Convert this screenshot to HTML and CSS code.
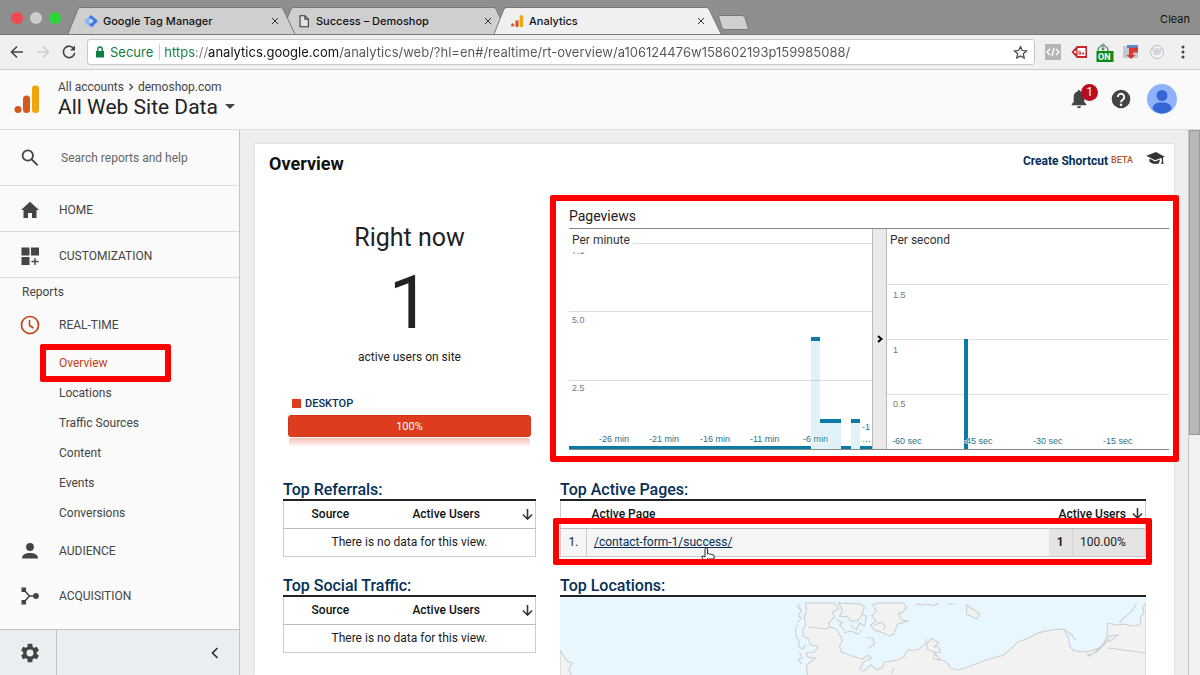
FILE: index.html
```
<!DOCTYPE html>
<html lang="en">
  <head>
    <meta charset="UTF-8" />
    <meta name="viewport" content="width=device-width, initial-scale=1.0" />
    <title>Analytics</title>
    <link rel="stylesheet" href="styles.css">
  </head>
  <body>
    <div class="tabStrip">
      <div class="lights">
        <span class="light red"></span>
        <span class="light grey"></span>
        <span class="light green"></span>
      </div>
      <div class="tabs">
        <div class="tab first">
          <svg class="tabShape" viewBox="0 0 227 27" preserveAspectRatio="none"><path d="M0 27 L10 2 Q11 .5 13 .5 H212 Q214 .5 215 2 L227 27" /></svg>
          <svg class="tabIcon" viewBox="0 0 16 16"><path fill="#8ab4f8" d="M7 1 1 7a1.4 1.4 0 0 0 0 2l6 6 3-3-4-4 5-4z" /><path fill="#4376e0" d="m8 1 7 6a1.4 1.4 0 0 1 0 2l-6 6-3-3 4-4-4-4z" /><path fill="#c7dafb" d="m8 5 3 3-3 3-3-3z" /></svg>
          <button class="tabTitle">Google Tag Manager</button>
          <button class="closeBtn" aria-label="Close tab"><svg viewBox="0 0 8 8"><path d="m1 1 6 6M7 1 1 7" /></svg></button>
        </div>
        <div class="tab">
          <svg class="tabShape" viewBox="0 0 227 27" preserveAspectRatio="none"><path d="M0 27 L10 2 Q11 .5 13 .5 H212 Q214 .5 215 2 L227 27" /></svg>
          <svg class="tabIcon" viewBox="0 0 16 16"><path fill="#e4e4e4" stroke="#333" stroke-width="1.2" d="M3.500 2h5.500l4 4v8.500H3.500zM9 2v4h4" /></svg>
          <button class="tabTitle">Success – Demoshop</button>
          <button class="closeBtn" aria-label="Close tab"><svg viewBox="0 0 8 8"><path d="m1 1 6 6M7 1 1 7" /></svg></button>
        </div>
        <div class="tab active">
          <svg class="tabShape" viewBox="0 0 227 27" preserveAspectRatio="none"><path d="M0 27 L10 2 Q11 .5 13 .5 H212 Q214 .5 215 2 L227 27" /></svg>
          <svg class="tabIcon" viewBox="0 0 16 16"><circle cx="3" cy="12.500" r="1.800" fill="#d4581c" /><rect x="6.200" y="7" width="3.600" height="8" rx="1.500" fill="#d4581c" /><rect x="11" y="1.500" width="4" height="13.500" rx="1.500" fill="#f0a50c" /></svg>
          <button class="tabTitle">Analytics</button>
          <button class="closeBtn" aria-label="Close tab"><svg viewBox="0 0 8 8"><path d="m1 1 6 6M7 1 1 7" /></svg></button>
        </div>
      </div>
      <button class="newTab" aria-label="New tab"><svg viewBox="0 0 31 15"><path d="M2 .5h22q2 0 3 2l3 10q.5 2-1 2H7q-2 0-3-2L.8 2.500Q.3.500 2 .5z" /></svg></button>
      <span class="profile">Clean</span>
    </div>

    <div class="toolbar">
      <button class="navBtn" aria-label="Back"><svg viewBox="0 0 16 16"><path d="M14 8H2.500M8 2.500 2.500 8 8 13.500" /></svg></button>
      <button class="navBtn" aria-label="Forward" disabled><svg viewBox="0 0 16 16"><path d="M2 8h11.500M8 2.500 13.500 8 8 13.500" /></svg></button>
      <button class="navBtn" aria-label="Reload"><svg viewBox="0 0 16 16"><path d="M13 5A5.700 5.700 0 1 0 13.700 8.800" /><path d="M14 1.500V6.500H9z" fill="#444" stroke="none" /></svg></button>
      <div class="omnibox">
        <svg class="lock" viewBox="0 0 10 12"><path fill="#0b8043" d="M1 5h8v6.500H1z" /><path fill="none" stroke="#0b8043" stroke-width="1.400" d="M2.800 5V3.200a2.200 2.200 0 0 1 4.400 0V5" /></svg>
        <label class="secure" for="url">Secure</label>
        <input class="url" id="url" type="text" value="https://analytics.google.com/analytics/web/?hl=en#/realtime/rt-overview/a106124476w158602193p159985088/" />
        <button class="starBtn" aria-label="Bookmark this page"><svg viewBox="0 0 16 16"><path d="m8 1.800 1.900 4.100 4.500.5-3.400 3 1 4.400L8 11.600l-4 2.200 1-4.400-3.400-3 4.500-.5z" /></svg></button>
      </div>
      <div class="extensions">
        <button class="ext" aria-label="Code"><svg viewBox="0 0 20 20"><path fill="#b4b4ba" d="M2 2h16v16H2z" /><path fill="none" stroke="#fff" stroke-width="1.400" d="M7 7 4 10l3 3M13 7l3 3-3 3M11 6l-2 8" /></svg></button>
        <button class="ext" aria-label="Tags"><svg viewBox="0 0 20 20"><path fill="#c4242c" d="M8 4h10v12H8l-5.500-6z" /><circle cx="6.300" cy="10" r="1.200" fill="#fff" /><path fill="#fff" d="M8.500 6h8v8h-8z" /><text x="9" y="12.500" fill="#c4242c" font-size="6" font-weight="700">9+</text></svg></button>
        <button class="ext" aria-label="Assistant"><svg viewBox="0 0 20 20"><path fill="none" stroke="#6b9a7c" stroke-width="1.500" d="M3 9c0-4 2-5 5-5s5 1 5 5" /><circle cx="8" cy="3.500" r="2" fill="#7aa68b" /><circle cx="8" cy="7" r="1.500" fill="#5b8f6e" /><path fill="#0b8a18" d="M1.500 9h17v11h-17z" /><text x="3" y="18" fill="#fff" font-size="9" font-weight="700">ON</text></svg></button>
        <button class="ext" aria-label="Downloads"><svg viewBox="0 0 20 20"><path fill="#c3c9cc" d="M2 4h15v12H2z" /><path fill="#4a90d9" d="M6 3h11v3H6z" /><path fill="#d93a35" d="M8 5.500h9v5h-5V13h2.500L10 17l-4.500-4H8z" /></svg></button>
        <button class="ext" aria-label="Data"><svg viewBox="0 0 20 20"><circle cx="10" cy="10" r="6.500" fill="#f5f5f5" stroke="#bbb" /><text x="10" y="9" text-anchor="middle" fill="#aaa" font-size="4">DATA</text><text x="10" y="13" text-anchor="middle" fill="#aaa" font-size="5">WP</text></svg></button>
        <button class="ext more" aria-label="Menu"><svg viewBox="0 0 20 20"><circle cx="10" cy="5" r="1.500" /><circle cx="10" cy="10" r="1.500" /><circle cx="10" cy="15" r="1.500" /></svg></button>
      </div>
    </div>

    <header class="header">
      <svg class="logo" viewBox="0 0 26 30"><circle cx="4" cy="25.500" r="3.500" fill="#d4581c" /><rect x="9" y="11.500" width="7" height="17.500" rx="3.500" fill="#d4581c" /><rect x="18" y="1.500" width="7" height="27.500" rx="3" fill="#f0a50c" /></svg>
      <div class="account">
        <div class="crumbs">All accounts <svg viewBox="0 0 8 10"><path d="m2 1 4 4-4 4" /></svg> demoshop.com</div>
        <button class="viewBtn">All Web Site Data <svg viewBox="0 0 10 5"><path d="M0 0h10L5 5z" /></svg></button>
      </div>
      <div class="headerIcons">
        <button class="bell" aria-label="Notifications">
          <svg viewBox="0 0 16 20"><path d="M8 1a1.500 1.500 0 0 1 1.500 1.600C12 3.300 13.300 5.500 13.300 8v5l2 2.200v1H.7v-1l2-2.200V8c0-2.500 1.300-4.700 3.800-5.400A1.500 1.500 0 0 1 8 1zM6 17.200h4a2 2 0 0 1-4 0z" /></svg>
          <span class="badge">1</span>
        </button>
        <button aria-label="Help"><svg class="help" viewBox="0 0 20 20"><circle cx="10" cy="10" r="9.300" fill="#444" /><path d="M6.800 8a3.200 3.200 0 1 1 5 2.600C10.500 11.500 10 12 10 13.300" fill="none" stroke="#fff" stroke-width="1.900" /><circle cx="10" cy="15.700" r="1.200" fill="#fff" /></svg></button>
        <button aria-label="Account"><svg class="avatar" viewBox="0 0 30 30"><circle cx="15" cy="15" r="15" fill="#8fb3fa" /><circle cx="15" cy="11.500" r="5.500" fill="#3566d6" /><path fill="#3566d6" d="M5.500 25c0-5 4-6.500 9.500-6.500s9.500 1.500 9.500 6.500c-3 3.500-6 4.500-9.500 4.500S8.500 28.500 5.500 25z" /></svg></button>
      </div>
    </header>

    <div class="page">
      <nav class="sidebar">
        <div class="searchRow">
          <label for="search" aria-label="Search"><svg class="navIcon" viewBox="0 0 20 20"><circle cx="7.800" cy="7.500" r="5.200" fill="none" stroke="#444" stroke-width="1.800" /><path stroke="#444" stroke-width="2" d="m11.700 11.400 6 6" /></svg></label>
          <input id="search" type="text" placeholder="Search reports and help" />
        </div>
        <a class="navRow lined" href="#home"><svg class="navIcon" viewBox="0 0 20 20"><path d="M10 1.800 19 10h-2.500v8H12v-5H8v5H3.500v-8H1z" /></svg>HOME</a>
        <a class="navRow lined" href="#customization"><svg class="navIcon" viewBox="0 0 20 20"><path d="M1.500 1.500h8v8h-8zM11 1.500h8v8h-8zM1.500 11h8v8h-8zM14.300 12h1.400v2.800h2.800v1.400h-2.800V19h-1.400v-2.800h-2.800v-1.400h2.800z" /></svg>CUSTOMIZATION</a>
        <div class="navLabel">Reports</div>
        <a class="navRow realtime" href="#realtime"><svg class="navIcon" viewBox="0 0 20 20"><circle cx="10" cy="10" r="8.500" fill="none" stroke="#c5400f" stroke-width="1.700" /><path fill="none" stroke="#c5400f" stroke-width="1.500" d="M9.500 5v5.500l4 2.500" /></svg>REAL-TIME</a>
        <ul class="subNav">
          <li class="current"><a href="#overview">Overview</a><span class="highlight"></span></li>
          <li><a href="#locations">Locations</a></li>
          <li><a href="#traffic">Traffic Sources</a></li>
          <li><a href="#content">Content</a></li>
          <li><a href="#events">Events</a></li>
          <li><a href="#conversions">Conversions</a></li>
        </ul>
        <a class="navRow" href="#audience"><svg class="navIcon" viewBox="0 0 20 20"><circle cx="10" cy="6" r="3.900" /><path d="M2 17.500c0-4 3.500-5.500 8-5.500s8 1.500 8 5.500z" /></svg>AUDIENCE</a>
        <a class="navRow" href="#acquisition"><svg class="navIcon" viewBox="0 0 20 20"><path d="M1.500 1.500h4.500v4.500h-4.500zM1.500 14h4.500v4.500h-4.500z" /><circle cx="16" cy="10" r="2.900" /><path fill="none" stroke="#444" stroke-width="1.600" d="m4 4 5.500 6H15M4 16l5.500-6" /></svg>ACQUISITION</a>
        <div class="sideFooter">
          <button class="admin" aria-label="Admin"><svg class="navIcon" viewBox="0 0 24 24"><path d="M19.400 13a7 7 0 0 0 0-2l2.300-1.800-2.200-3.900-2.800 1.100a8 8 0 0 0-1.800-1L14.500 2h-5l-.4 3.400a8 8 0 0 0-1.800 1L4.500 5.300 2.300 9.200 4.600 11a7 7 0 0 0 0 2l-2.300 1.800 2.200 3.900 2.800-1.100a8 8 0 0 0 1.800 1l.4 3.400h5l.4-3.400a8 8 0 0 0 1.800-1l2.800 1.100 2.200-3.900zM12 15.800a3.800 3.800 0 1 1 0-7.600 3.800 3.800 0 0 1 0 7.600z" /></svg></button>
          <button class="collapse" aria-label="Collapse menu"><svg viewBox="0 0 8 12"><path d="M6.500 1 1.500 6l5 5" /></svg></button>
        </div>
      </nav>

      <main class="content">
        <div class="card">
          <div class="cardTop">
            <h1>Overview</h1>
            <a class="shortcut" href="#shortcut">Create Shortcut <sup>BETA</sup></a>
            <button class="learn" aria-label="Learn"><svg viewBox="0 0 20 14"><path d="M10.500 0 0 4l9.500 5 6.500-2.500.8.500.2 3-1 3h2.500L18 6l2-1z" /><path d="M3.500 7v3.500q4 3.500 10 2L15 8 9.500 10.300z" /></svg></button>
          </div>

          <div class="summary">
            <section class="rightNow">
              <h2>Right now</h2>
              <div class="count">1</div>
              <p>active users on site</p>
              <div class="legend"><span></span>DESKTOP</div>
              <div class="bar">100%</div>
            </section>

            <section class="pageviews">
              <h2>Pageviews</h2>
              <div class="charts">
                <div class="chart minute">
                  <svg viewBox="0 0 303 220">
                    <path class="grid" d="M0 14.500h303M0 82.500h303M0 151.500h303" />
                    <path class="area" d="M242 220V108h9v82h21v30zM282 220v-30h9v30z" />
                    <path class="line" d="M242 110h9M251 192h21M282 192h9" />
                    <path class="line base" d="M0 218.500h242M272 218.500h10M291 218.500h12" />
                    <g class="value"><text x="3" y="25">7.5</text><text x="3" y="94">5.0</text><text x="3" y="162">2.5</text></g>
                    <g class="time"><text x="30" y="213">-26 min</text><text x="80" y="213">-21 min</text><text x="131" y="213">-16 min</text><text x="181" y="213">-11 min</text><text x="234" y="213">-6 min</text><text x="293" y="201">-1</text><text x="293" y="213">…</text></g>
                  </svg>
                  <h3>Per minute</h3>
                </div>
                <button class="splitter" aria-label="Expand"><svg viewBox="0 0 6 8"><path d="m1 1 3.500 3L1 7" /></svg></button>
                <div class="chart second">
                  <svg viewBox="0 0 282 220">
                    <path class="grid" d="M0 55.500h282M0 110.500h282M0 165.500h282" />
                    <path class="spike" d="M77 110h4v110h-4z" />
                    <g class="value"><text x="6" y="69">1.5</text><text x="6" y="124">1</text><text x="6" y="178">0.5</text></g>
                    <g class="time"><text x="5" y="215">-60 sec</text><text x="76" y="215">-45 sec</text><text x="146" y="215">-30 sec</text><text x="216" y="215">-15 sec</text></g>
                  </svg>
                  <h3>Per second</h3>
                </div>
              </div>
              <span class="highlight"></span>
            </section>
          </div>

          <div class="reports">
            <div class="column">
              <section class="report">
                <h2>Top Referrals:</h2>
                <table>
                  <thead>
                    <tr><th class="source">Source</th><th>Active Users</th><th class="sort"><svg viewBox="0 0 12 12"><path d="M6 0v11M1 6l5 5 5-5" /></svg></th></tr>
                  </thead>
                  <tbody>
                    <tr><td class="empty" colspan="3">There is no data for this view.</td></tr>
                  </tbody>
                </table>
              </section>
              <section class="report">
                <h2>Top Social Traffic:</h2>
                <table>
                  <thead>
                    <tr><th class="source">Source</th><th>Active Users</th><th class="sort"><svg viewBox="0 0 12 12"><path d="M6 0v11M1 6l5 5 5-5" /></svg></th></tr>
                  </thead>
                  <tbody>
                    <tr><td class="empty" colspan="3">There is no data for this view.</td></tr>
                  </tbody>
                </table>
              </section>
              <section class="report">
                <h2>Top Keywords:</h2>
              </section>
            </div>

            <div class="column">
              <section class="report activePages">
                <h2>Top Active Pages:</h2>
                <table>
                  <thead>
                    <tr><th class="index"></th><th class="pageHead">Active Page</th><th class="usersHead" colspan="2">Active Users <svg viewBox="0 0 12 12"><path d="M6 0v11M1 6l5 5 5-5" /></svg></th></tr>
                  </thead>
                  <tbody>
                    <tr>
                      <td class="index">1.</td>
                      <td class="path"><a href="#contact">/contact-form-1/success/</a><svg class="cursor" viewBox="0 0 14 18"><path d="M4 10V2.200a1.300 1.300 0 0 1 2.600 0V7q1-1 2.200.3 1-.8 2 .4 1.800-.6 2.200 1v3.500l-1.200 3.300V17H5.500v-1.500L1 10.800q-.8-1.800 1-1.800z" /><path d="M6.700 11v3M9 11v3M11 11v3" /></svg></td>
                      <td class="users">1</td>
                      <td class="percent">100.00%</td>
                    </tr>
                  </tbody>
                </table>
                <span class="highlight"></span>
              </section>
              <section class="report">
                <h2>Top Locations:</h2>
                <svg class="map" viewBox="0 0 585 90" preserveAspectRatio="xMinYMin slice">
                  <path d="M0 53 3 58 7 64 12 66 9 72 12 80V90H0z" />
                  <path d="M245 6 246 13 244 20 245 28 242 33 243 39 248 42 250 48 258 49 254 55 246 56 247 60 255 61 250 65 246 68 247 78 245 90H585V6L582 10 583 17 580 19 579 28 571 29 563 27 555 28 547 26 546 39 543 46 538 51 530 54 520 55 512 53 509 49 507 39 503 32 490 33 477 36 468 41 457 45 450 52 443 58 425 63 407 70 397 73 390 71 386 65 379 62 374 56 380 55 377 49 373 50 378 46 371 41 368 45 363 48 357 53 347 53 343 60 337 63 324 65 322 70 317 73 310 68 303 74 299 72 303 65 311 61 307 58 302 62 292 59 281 55 279 49 282 44 280 39 276 32 270 30 268 26 274 20 272 15 278 12 274 6z" />
                  <path d="M278 6 282 14 279 19 287 20 290 24 297 24 301 18 304 10 300 7zM312 8 317 6 343 6 346 11 342 15 338 17 341 23 348 24 337 27 333 37 329 39 320 35 314 33 310 28 316 24 311 19 316 14zM406 8 419 17 416 22 406 17z" />
                  <path d="M240 7 237 10 241 13 238 19 241 21 237 26M237 28 235 34 236 40 239 44 238 49 242 52 245 48M239 55 242 61 238 62 241 67M248 30 257 31 264 32 269 30M290 28 296 33 299 26 304 29 306 19 302 18M283 36 290 34 298 37 301 33M306 41 312 41 314 47 308 51M276 22 282 26 279 28 284 33M355 7 362 8 367 7 373 9 378 6M387 7 394 7M503 32 510 37 515 43M526 57 530 58 543 48 549 39 557 38 551 43 545 45 537 54 528 59 526 57M558 26 564 20 571 14 575 7M547 51 585 56M333 71 331 77M365 42 367 52 374 55 373 62 380 63M314 28 321 25 325 29 323 33" />
                </svg>
              </section>
            </div>
          </div>
        </div>
      </main>
      <div class="scrollbar"><div class="thumb"></div></div>
    </div>
  </body>
</html>
```
FILE: styles.css
```
* {
  box-sizing: border-box;
}

body {
  margin: 0;
  height: 100vh;
  display: flex;
  flex-direction: column;
  overflow: hidden;
  font-family: Roboto, "Liberation Sans", sans-serif;
  font-size: 12px;
  color: #222;
  background-color: #fafafa;
}

button {
  padding: 0;
  border: none;
  background: none;
  font: inherit;
  color: inherit;
  display: flex;
  align-items: center;
}

a {
  color: inherit;
  text-decoration: none;
}

h1,
h2,
h3,
p,
ul {
  margin: 0;
  padding: 0;
}

svg {
  display: block;
  flex: none;
}

/* browser window */
.tabStrip {
  height: 35px;
  flex: none;
  display: flex;
  align-items: flex-end;
  background-color: #8e8e8e;
  border-bottom: 1px solid #777;
}

.lights {
  display: flex;
  gap: 7px;
  width: 68px;
  padding-left: 11px;
  padding-bottom: 10px;
}

.light {
  width: 12px;
  height: 12px;
  border-radius: 50%;
}

.red {
  background-color: #f04a50;
}

.grey {
  background-color: #cdcdcd;
}

.green {
  background-color: #2bd53c;
}

.tabs {
  display: flex;
}

.tab {
  position: relative;
  width: 227px;
  height: 27px;
  padding: 0 16px 0 16px;
  display: flex;
  align-items: center;
}

.tab + .tab {
  margin-left: -14px;
}

.tab.first {
  z-index: 1;
}

.tab.active {
  z-index: 2;
  margin-bottom: -1px;
}

.tabShape {
  position: absolute;
  inset: 0;
  z-index: -1;
  width: 100%;
  height: 100%;
  fill: #cfcfcf;
  stroke: #777;
}

.tab:not(.first) {
  isolation: isolate;
}

.active .tabShape {
  fill: #f0f0f0;
}

.tabIcon {
  width: 14px;
  height: 14px;
}

.tabTitle {
  flex: 1;
  padding-left: 5px;
  font-family: Inter, sans-serif;
  font-size: 11px;
  font-weight: 500;
  color: #111;
}

.closeBtn svg {
  width: 8px;
  height: 8px;
  stroke: #333;
}

.newTab {
  padding-bottom: 4px;
  margin-left: -3px;
}

.newTab svg {
  width: 31px;
  height: 15px;
  fill: #cfcfcf;
  stroke: #777;
}

.profile {
  margin-left: auto;
  padding: 0 10px 8px 0;
  font-family: Inter, sans-serif;
  font-size: 11px;
  color: #111;
}

.toolbar {
  height: 35px;
  flex: none;
  display: flex;
  align-items: center;
  padding: 0 7px 0 9px;
  background-color: #f0f0f0;
  border-bottom: 1px solid #ccc;
}

.navBtn {
  width: 26px;
}

.navBtn svg {
  width: 16px;
  height: 16px;
  fill: none;
  stroke: #444;
  stroke-width: 1.6;
}

.navBtn:disabled svg {
  stroke: #ccc;
}

.omnibox {
  flex: 1;
  height: 26px;
  display: flex;
  align-items: center;
  padding: 0 6px 0 7px;
  background-color: #fff;
  border: 1px solid #c8c8c8;
  border-radius: 3px;
}

.lock {
  width: 10px;
  height: 12px;
}

.secure {
  margin-left: 5px;
  padding-right: 6px;
  border-right: 1px solid #ccc;
  color: #0b8043;
  font-family: Inter, sans-serif;
  font-size: 13px;
}

/* scheme, host and path each get their own colour */
.url {
  flex: 1;
  min-width: 0;
  padding: 0 0 0 4px;
  border: none;
  outline: none;
  font-family: Inter, sans-serif;
  font-size: 13px;
  color: #555;
  background: linear-gradient(to right, #0b8043 36px, #777 36px, #777 48px, #111 48px, #111 179px, #555 179px);
  background-clip: text;
  -webkit-background-clip: text;
  -webkit-text-fill-color: transparent;
}

.starBtn svg {
  width: 15px;
  height: 15px;
  fill: none;
  stroke: #444;
  stroke-width: 1.3;
}

.extensions {
  display: flex;
  align-items: center;
  gap: 6px;
  padding-left: 8px;
}

.ext svg {
  width: 20px;
  height: 20px;
}

.more svg {
  fill: #444;
}

/* analytics header */
.header {
  height: 60px;
  flex: none;
  display: flex;
  align-items: center;
  padding: 0 23px 2px 14px;
  border-bottom: 1px solid #dcdcdc;
}

.logo {
  width: 26px;
  height: 30px;
}

.account {
  padding-left: 18px;
}

.crumbs {
  display: flex;
  align-items: center;
  gap: 4px;
  line-height: 16px;
  color: #444;
}

.crumbs svg {
  width: 6px;
  height: 8px;
  fill: none;
  stroke: #444;
  stroke-width: 1.6;
}

.viewBtn {
  gap: 7px;
  font-size: 21px;
  line-height: 24px;
}

.viewBtn svg {
  width: 10px;
  height: 5px;
  fill: #444;
}

.headerIcons {
  margin-left: auto;
  display: flex;
  align-items: center;
  gap: 16px;
}

.bell {
  position: relative;
  width: 24px;
}

.bell svg {
  width: 16px;
  height: 20px;
  fill: #444;
}

.badge {
  position: absolute;
  top: -5px;
  left: 10px;
  width: 17px;
  height: 17px;
  border-radius: 50%;
  background-color: #b70d22;
  color: #fff;
  line-height: 17px;
  text-align: center;
}

.help {
  width: 20px;
  height: 20px;
}

.avatar {
  width: 30px;
  height: 30px;
}

.page {
  flex: 1;
  min-height: 0;
  display: flex;
  overflow: hidden;
}

/* sidebar */
.sidebar {
  width: 240px;
  flex: none;
  display: flex;
  flex-direction: column;
  border-right: 1px solid #c4c4c4;
  color: #444;
}

.navIcon {
  width: 20px;
  height: 20px;
  fill: #444;
}

.searchRow {
  height: 56px;
  flex: none;
  display: flex;
  align-items: center;
  gap: 19px;
  padding-left: 20px;
  border-bottom: 1px solid #ddd;
}

.searchRow input {
  flex: 1;
  min-width: 0;
  border: none;
  outline: none;
  background: none;
  font: inherit;
}

.searchRow input::placeholder {
  color: #666;
}

.navRow {
  height: 45px;
  flex: none;
  display: flex;
  align-items: center;
  gap: 19px;
  padding-left: 20px;
}

.navRow.lined {
  height: 46px;
  padding-top: 2px;
  border-bottom: 1px solid #ddd;
}

.navLabel {
  padding-left: 22px;
  line-height: 28px;
}

.navRow.realtime {
  height: 38px;
  margin-bottom: 4px;
}

.subNav {
  list-style: none;
}

.subNav li {
  position: relative;
  padding-left: 59px;
  line-height: 30px;
}

.subNav .current {
  color: #c5400f;
}

/* red frames lie over the parts they mark */
.highlight {
  position: absolute;
  border: 6px solid #fe0000;
  border-radius: 2px;
  pointer-events: none;
}

.subNav .highlight {
  top: -4px;
  bottom: -4px;
  left: 40px;
  width: 131px;
}

.sideFooter {
  margin-top: auto;
  height: 46px;
  flex: none;
  display: flex;
  background-color: #e9eff0;
  border-top: 1px solid #c4c4c4;
}

.admin {
  width: 57px;
  padding-left: 19px;
  border-right: 1px solid #c4c4c4;
}

.admin .navIcon {
  width: 22px;
  height: 22px;
}

.collapse {
  flex: 1;
  justify-content: flex-end;
  padding-right: 20px;
}

.collapse svg {
  width: 8px;
  height: 12px;
  fill: none;
  stroke: #333;
  stroke-width: 1.7;
}

/* report card */
.content {
  flex: 1;
  min-width: 0;
  padding: 14px 14px 0 15px;
  background-color: #eee;
}

.card {
  height: 100%;
  background-color: #fff;
  box-shadow: 0 0 2px #ccc;
}

.cardTop {
  height: 60px;
  display: flex;
  align-items: flex-start;
  padding: 8px 9px 0 14px;
}

h1 {
  font-size: 18px;
  line-height: 24px;
  color: #111;
}

.shortcut {
  margin-left: auto;
  font-weight: 700;
  line-height: 18px;
  color: #052f57;
}

.shortcut sup {
  font-size: 9px;
  font-weight: 500;
  line-height: 1;
  vertical-align: 2px;
  color: #b4552d;
}

.learn {
  margin-left: 13px;
}

.learn svg {
  width: 19px;
  height: 13px;
  fill: #333;
}

.summary {
  display: grid;
  grid-template-columns: 243fr 600fr;
  gap: 38px;
  padding: 0 5px 0 33px;
}

.rightNow {
  text-align: center;
  padding-top: 17px;
}

.rightNow h2 {
  margin-bottom: 2px;
  font-size: 25px;
  font-weight: 400;
  line-height: 34px;
}

.count {
  font-size: 74px;
  line-height: 92px;
}

.rightNow p {
  line-height: 16px;
}

.legend {
  display: flex;
  align-items: center;
  gap: 4px;
  margin-top: 27px;
  padding-left: 4px;
  line-height: 23px;
  font-size: 11px;
  font-weight: 500;
  color: #052f57;
}

.legend span {
  width: 9px;
  height: 9px;
  background-color: #dd3c1f;
}

.bar {
  position: relative;
  height: 22px;
  border-radius: 3px;
  border: 1px solid #d0341a;
  background-color: #dd3c1f;
  color: #fff;
  font-size: 11px;
  line-height: 21px;
}

.bar::after {
  content: "";
  position: absolute;
  top: 22px;
  left: 0;
  right: 0;
  height: 9px;
  border-radius: 3px 3px 0 0;
  background: linear-gradient(#f3bdb2, #fff);
}

.pageviews {
  position: relative;
}

.pageviews h2 {
  font-size: 14px;
  font-weight: 400;
  line-height: 24px;
  border-bottom: 1px solid #888;
}

.charts {
  display: flex;
  border-bottom: 1px solid #888;
}

.chart {
  position: relative;
  min-width: 0;
}

.chart svg {
  width: 100%;
}

.minute {
  flex: 303;
}

.second {
  flex: 282;
}

.chart h3 {
  position: absolute;
  top: 0;
  left: 0;
  padding: 0 3px;
  font-size: 12px;
  font-weight: 400;
  line-height: 23px;
  color: #333;
  background-color: #fff;
}

.grid {
  stroke: #ddd;
}

.area {
  fill: #058dc7;
  fill-opacity: 0.12;
}

.line {
  fill: none;
  stroke: #0a7ba5;
  stroke-width: 4;
}

.base {
  stroke-width: 3;
}

.spike {
  fill: #0a7ba5;
  stroke: #fff;
  paint-order: stroke;
  stroke-width: 2;
}

.value,
.time {
  font-family: "Liberation Sans", Arial, sans-serif;
  font-size: 9px;
  fill: #777;
}

.time {
  fill: #2c7184;
  stroke: #fff;
  stroke-opacity: 0.6;
  stroke-width: 2;
  paint-order: stroke;
}

.splitter {
  width: 15px;
  flex: none;
  justify-content: center;
  background-color: #e9e9e9;
  border-left: 1px solid #bbb;
  border-right: 1px solid #bbb;
}

.splitter svg {
  width: 6px;
  height: 8px;
  fill: none;
  stroke: #000;
  stroke-width: 2;
}

.pageviews .highlight {
  inset: -9px -10px -12px -19px;
}

.reports {
  display: grid;
  grid-template-columns: 253fr 586fr;
  gap: 24px;
  padding: 30px 28px 0 28px;
}

.report {
  position: relative;
  height: 96px;
}

.report h2 {
  font-size: 16px;
  font-weight: 500;
  line-height: 20px;
  height: 21px;
  color: #052f57;
  border-bottom: 2px solid #222;
}

table {
  width: 100%;
  border-collapse: collapse;
  border: 1px solid #ccc;
  border-top: none;
}

th {
  height: 27px;
  padding: 0;
  font-weight: 500;
  color: #111;
  border-bottom: 1px solid #bbb;
}

th svg {
  width: 11px;
  height: 11px;
  fill: none;
  stroke: #333;
  stroke-width: 1.7;
}

td {
  height: 28px;
  padding: 0;
}

.source {
  width: 37%;
}

.sort {
  width: 20px;
  padding-left: 6px;
}

.empty {
  text-align: center;
}

.index {
  width: 26px;
  text-align: center;
}

td.index {
  border-right: 1px solid #ccc;
}

.pageHead {
  padding-left: 5px;
  text-align: left;
}

.usersHead {
  padding-left: 10px;
  text-align: left;
}

.usersHead svg {
  display: inline-block;
  margin-left: 3px;
  vertical-align: -1px;
}

.activePages tbody {
  background-color: #f5f5f5;
}

.path {
  position: relative;
  padding-left: 7px;
  color: #052f57;
}

.path a {
  text-decoration: underline;
}

.cursor {
  position: absolute;
  top: 18px;
  left: 114px;
  width: 14px;
  height: 18px;
  fill: #fff;
  stroke: #222;
}

.users,
.percent {
  background-color: #e4e4e4;
}

.users {
  width: 24px;
  text-align: center;
  font-weight: 700;
  border-right: 1px solid #d4d4d4;
}

.percent {
  width: 73px;
  padding-left: 7px;
}

.activePages .highlight {
  top: 38px;
  bottom: 11px;
  left: -7px;
  right: -6px;
}

.map {
  width: 100%;
  height: 90px;
  background-color: #e8f6fd;
  fill: #f2f2f2;
  stroke: #c9cdcf;
}

.map path:last-child {
  fill: none;
}

.scrollbar {
  width: 12px;
  flex: none;
  background-color: #f1f1f1;
  border-left: 1px solid #c8c8c8;
}

.thumb {
  height: 56%;
  background-color: #b8b8b8;
  border: 1px solid #999;
}
```
